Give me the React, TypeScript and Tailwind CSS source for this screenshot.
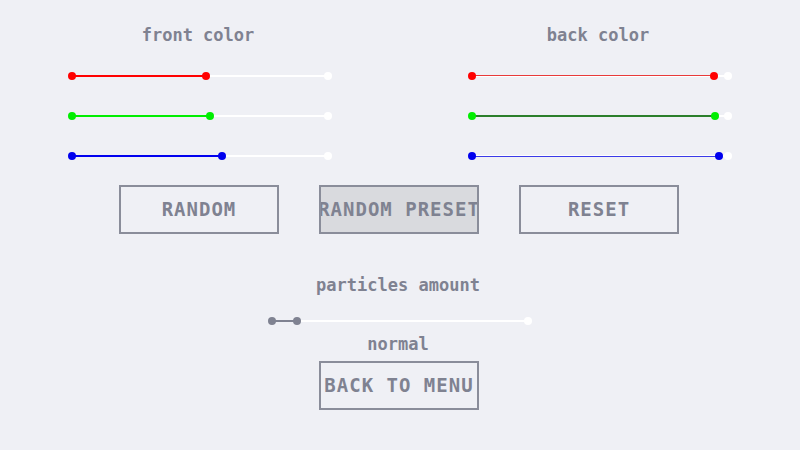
import React from "react";

const font = { fontFamily: '"DejaVu Sans Mono", "Liberation Mono", monospace' };

type SliderProps = {
  color: string;
  value: number; // 0..1
  thin?: string;
  fillColor?: string;
};

function Slider({ color, value, thin, fillColor }: SliderProps) {
  const px = Math.round(value * 256);
  return (
    <div className="relative w-[264px] h-[8px]">
      <div className="absolute left-[4px] right-[4px] top-[3px] h-[2px] bg-white" />
      <div
        className={`absolute left-[4px] ${thin ?? "top-[3px] h-[2px]"}`}
        style={{ width: px, backgroundColor: fillColor ?? color }}
      />
      <div className="absolute left-0 top-0 w-[8px] h-[8px] rounded-full" style={{ backgroundColor: color }} />
      <div className="absolute right-0 top-0 w-[8px] h-[8px] rounded-full bg-white" />
      <div className="absolute top-0 w-[8px] h-[8px] rounded-full" style={{ left: px, backgroundColor: color }} />
    </div>
  );
}

function Button({ label, active }: { label: string; active?: boolean }) {
  return (
    <div
      className={`w-[160px] h-[49px] border-2 border-[#8a8d9a] flex items-center justify-center overflow-hidden whitespace-nowrap text-[19px] font-bold tracking-[1px] text-[#7f8291] ${active ? "bg-[#d9dade]" : ""}`}
      style={font}
    >
      {label}
    </div>
  );
}

const label = "h-[22px] leading-[22px] text-[17px] font-bold text-[#7f8291]";

export default function App() {
  return (
    <div className="w-[800px] h-[450px] bg-[#eff0f5] flex flex-col items-center overflow-hidden" style={font}>
      <div className="flex w-[800px] pt-[24px]">
        <div className="w-[400px] flex flex-col items-center">
          <div className={`${label} -ml-[4px]`}>front color</div>
          <div className="mt-[26px] flex flex-col gap-[32px]">
            <Slider color="#ff0000" value={134 / 256} />
            <Slider color="#00ee00" value={138 / 256} />
            <Slider color="#0000ee" value={150 / 256} />
          </div>
        </div>
        <div className="w-[400px] flex flex-col items-center">
          <div className={`${label} -ml-[4px]`}>back color</div>
          <div className="mt-[26px] flex flex-col gap-[32px]">
            <Slider color="#ff0000" value={242 / 256} thin="top-[3px] h-[1px]" fillColor="#e83a3a" />
            <Slider color="#00ee00" value={243 / 256} thin="top-[3px] h-[2px]" fillColor="#2b7f2b" />
            <Slider color="#0000ee" value={247 / 256} thin="top-[4px] h-[1px]" fillColor="#3a3ae8" />
          </div>
        </div>
      </div>
      <div className="flex gap-[40px] mt-[25px] -ml-[2px]">
        <Button label="RANDOM" />
        <Button label="RANDOM PRESET" active />
        <Button label="RESET" />
      </div>
      <div className={`mt-[40px] ${label} -ml-[4px]`}>particles amount</div>
      <div className="mt-[21px]">
        <Slider color="#7f8291" value={25 / 256} />
      </div>
      <div className={`mt-[8px] ${label} -ml-[4px]`}>normal</div>
      <div className="mt-[6px] -ml-[2px]">
        <Button label="BACK TO MENU" />
      </div>
    </div>
  );
}
